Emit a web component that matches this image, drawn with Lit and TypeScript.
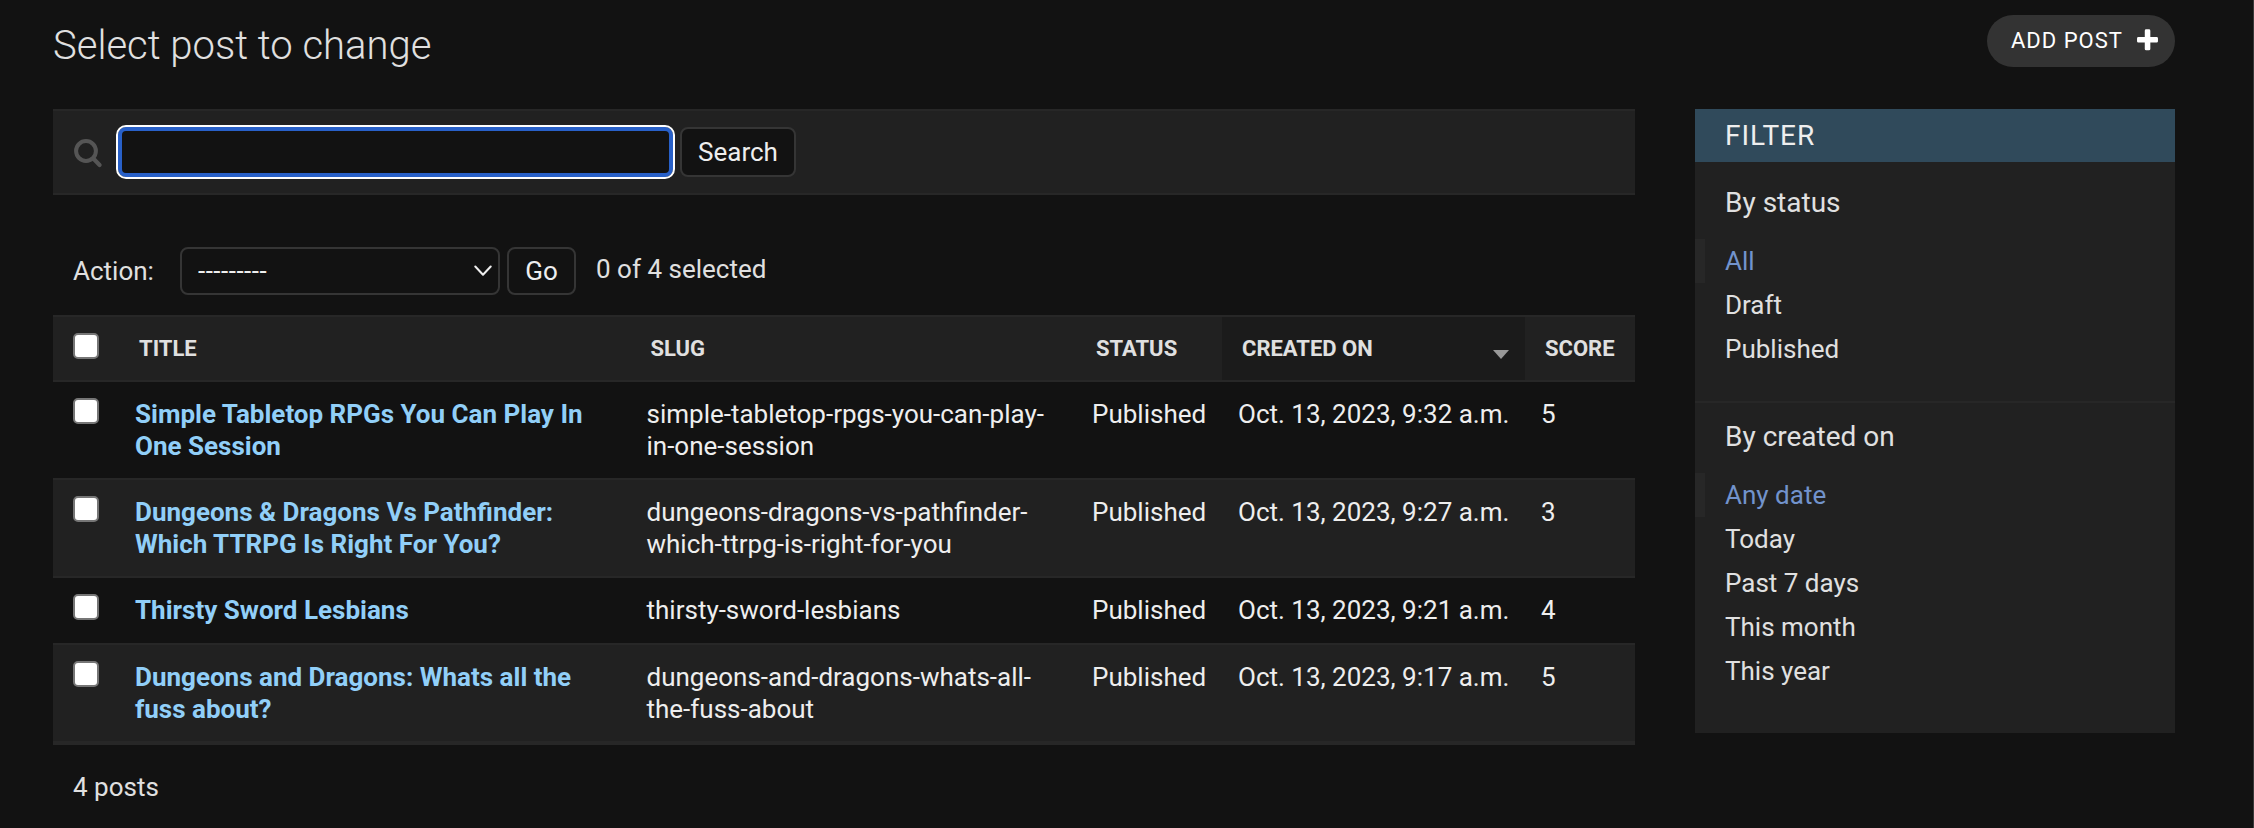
import { LitElement, html, css } from "lit";
import { customElement, state } from "lit/decorators.js";
import { classMap } from "lit/directives/class-map.js";

interface Post {
  title: string;
  slug: string;
  status: string;
  created: string;
  score: number;
}

interface FilterGroup {
  label: string;
  options: string[];
}

const POSTS: Post[] = [
  {
    title: "Simple Tabletop RPGs You Can Play In One Session",
    slug: "simple-tabletop-rpgs-you-can-play-in-one-session",
    status: "Published",
    created: "Oct. 13, 2023, 9:32 a.m.",
    score: 5,
  },
  {
    title: "Dungeons & Dragons Vs Pathfinder: Which TTRPG Is Right For You?",
    slug: "dungeons-dragons-vs-pathfinder-which-ttrpg-is-right-for-you",
    status: "Published",
    created: "Oct. 13, 2023, 9:27 a.m.",
    score: 3,
  },
  {
    title: "Thirsty Sword Lesbians",
    slug: "thirsty-sword-lesbians",
    status: "Published",
    created: "Oct. 13, 2023, 9:21 a.m.",
    score: 4,
  },
  {
    title: "Dungeons and Dragons: Whats all the fuss about?",
    slug: "dungeons-and-dragons-whats-all-the-fuss-about",
    status: "Published",
    created: "Oct. 13, 2023, 9:17 a.m.",
    score: 5,
  },
];

const FILTERS: FilterGroup[] = [
  { label: "By status", options: ["All", "Draft", "Published"] },
  {
    label: "By created on",
    options: ["Any date", "Today", "Past 7 days", "This month", "This year"],
  },
];

@customElement("filter-panel")
export class FilterPanel extends LitElement {
  @state() private chosen = FILTERS.map(() => 0);

  static styles = css`
    :host {
      display: block;
      height: 624px;
      background: #212121;
      color: #e0e0e0;
    }
    .heading {
      margin: 0;
      height: 53px;
      padding-left: 30px;
      background: #304a5b;
      color: #eeeeee;
      font-size: 28px;
      font-weight: 400;
      line-height: 53px;
      letter-spacing: 1px;
      text-transform: uppercase;
    }
    .group {
      padding: 24px 0 20px;
      border-bottom: 2px solid #272727;
    }
    .group + .group {
      padding-top: 17px;
    }
    .group:last-child {
      border-bottom: none;
    }
    .label {
      margin: 0 0 20px;
      padding-left: 30px;
      font-size: 28px;
      font-weight: 400;
      line-height: 33px;
    }
    .options {
      margin: 0 0 10px;
      padding: 0;
      list-style: none;
    }
    .option {
      box-sizing: border-box;
      height: 44px;
      padding-left: 20px;
      border-left: 10px solid transparent;
      line-height: 44px;
      cursor: pointer;
    }
    .option.selected {
      border-left-color: #272727;
      color: #7293cc;
    }
  `;

  private choose(group: number, option: number) {
    this.chosen = this.chosen.map((c, i) => (i === group ? option : c));
  }

  render() {
    return html`
      <h2 class="heading">Filter</h2>
      ${FILTERS.map(
        (group, g) => html`<section class="group">
          <h3 class="label">${group.label}</h3>
          <ul class="options">
            ${group.options.map(
              (option, o) => html`<li
                class=${classMap({ option: true, selected: this.chosen[g] === o })}
                @click=${() => this.choose(g, o)}
              >${option}</li>`
            )}
          </ul>
        </section>`
      )}
    `;
  }
}

@customElement("app-root")
export class AppRoot extends LitElement {
  @state() private selected = new Set<number>();

  static styles = css`
    :host {
      display: block;
      box-sizing: border-box;
      height: 828px;
      overflow: hidden;
      padding: 15px 78px 0 53px;
      border-right: 1px solid #3a3a3a;
      background: #121212;
      color: #e0e0e0;
      font-family: Roboto, "Liberation Sans", sans-serif;
      font-size: 26px;
      line-height: 32px;
    }
    .top {
      display: flex;
      justify-content: space-between;
      align-items: flex-start;
      height: 94px;
    }
    .page-title {
      margin: 7px 0 0;
      font-size: 40px;
      font-weight: 300;
      line-height: 47px;
    }
    .add {
      display: flex;
      align-items: center;
      box-sizing: border-box;
      width: 188px;
      height: 52px;
      padding-left: 24px;
      gap: 14px;
      border-radius: 26px;
      background: #333333;
      color: #ffffff;
      font-size: 22px;
      letter-spacing: 1px;
      line-height: 50px;
      white-space: nowrap;
    }
    .plus {
      width: 21px;
      height: 22px;
      margin-bottom: 2px;
      flex: none;
    }
    .columns {
      display: grid;
      grid-template-columns: 1582px 480px;
      column-gap: 60px;
      align-items: start;
    }
    .toolbar {
      display: flex;
      align-items: center;
      box-sizing: border-box;
      height: 86px;
      padding-left: 20px;
      border-top: 2px solid #272727;
      border-bottom: 2px solid #272727;
      background: #212121;
    }
    .lens {
      width: 30px;
      height: 30px;
      margin: 2px 13px 0 0;
    }
    .query {
      box-sizing: border-box;
      width: 559px;
      height: 54px;
      margin: 0 5px 0 0;
      padding: 0 12px;
      border: 2px solid #ffffff;
      border-radius: 10px;
      box-shadow: inset 0 0 0 4px #2860c8;
      outline: none;
      background: #121212;
      color: #eeeeee;
      font: inherit;
    }
    .button {
      box-sizing: border-box;
      padding: 0;
      border: 2px solid #353535;
      border-radius: 8px;
      background: #121212;
      color: #eeeeee;
      font: inherit;
    }
    .search-button {
      width: 116px;
      height: 50px;
    }
    .actions {
      display: flex;
      align-items: center;
      height: 48px;
      margin: 52px 0 20px;
      padding-left: 20px;
    }
    .actions-label {
      width: 107px;
    }
    .picker {
      display: grid;
      width: 320px;
      height: 48px;
      margin-right: 7px;
    }
    .select {
      grid-area: 1 / 1;
      appearance: none;
      box-sizing: border-box;
      width: 100%;
      padding: 0 16px;
      border: 2px solid #353535;
      border-radius: 8px;
      background: #121212;
      color: #eeeeee;
      font: inherit;
      letter-spacing: 0.5px;
    }
    .chevron {
      grid-area: 1 / 1;
      justify-self: end;
      align-self: center;
      width: 18px;
      height: 12px;
      margin-right: 8px;
      pointer-events: none;
    }
    .go {
      width: 69px;
      height: 48px;
    }
    .counter {
      margin: 0 0 4px 20px;
    }
    .results {
      width: 100%;
      table-layout: fixed;
      border-collapse: separate;
      border-spacing: 0;
      border-bottom: 2px solid #272727;
    }
    .col-check { width: 66px; }
    .col-title { width: 511.5px; }
    .col-slug { width: 445.5px; }
    .col-status { width: 146px; }
    .col-created { width: 303px; }
    .head {
      box-sizing: border-box;
      height: 67px;
      padding: 0 0 0 20px;
      border-top: 2px solid #272727;
      border-bottom: 2px solid #272727;
      background: #212121;
      font-size: 22px;
      font-weight: 700;
      line-height: 28px;
      text-align: left;
      text-transform: uppercase;
      vertical-align: middle;
      white-space: nowrap;
    }
    .head.check {
      padding-top: 16px;
      vertical-align: top;
    }
    .head.sorted {
      background: #1b1b1b;
    }
    .sort-row {
      display: flex;
      justify-content: space-between;
      align-items: center;
      padding-right: 16px;
    }
    .caret {
      width: 16px;
      height: 9px;
      margin-top: 12px;
    }
    .cell {
      box-sizing: border-box;
      height: 67px;
      padding: 16px 16px 0;
      border-bottom: 2px solid #272727;
      color: #eeeeee;
      font-weight: 400;
      text-align: left;
      vertical-align: top;
    }
    .row.tall .cell {
      height: 98px;
    }
    .row:nth-child(even) .cell {
      background: #212121;
    }
    .cell.check {
      padding-left: 20px;
    }
    .cell.title {
      color: #91cff8;
      font-weight: 700;
    }
    .cell.nowrap {
      white-space: nowrap;
    }
    .box {
      display: block;
      appearance: none;
      box-sizing: border-box;
      width: 26px;
      height: 26px;
      margin: 0;
      border: 2px solid #767676;
      border-radius: 5px;
      background: #ffffff;
    }
    .box:checked {
      border-color: #2860c8;
      background: #2860c8;
    }
    .total {
      margin: 26px 0 0;
      padding-left: 20px;
    }
  `;

  private toggle(index: number) {
    const next = new Set(this.selected);
    if (!next.delete(index)) next.add(index);
    this.selected = next;
  }

  private toggleAll() {
    this.selected =
      this.selected.size === POSTS.length ? new Set() : new Set(POSTS.keys());
  }

  private renderRow(post: Post, index: number) {
    const tall = post.title.length > 34;
    return html`<tr class=${classMap({ row: true, tall })}>
      <td class="cell check">
        <input
          class="box"
          type="checkbox"
          .checked=${this.selected.has(index)}
          @change=${() => this.toggle(index)}
        />
      </td>
      <th class="cell title">${post.title}</th>
      <td class="cell">${post.slug}</td>
      <td class="cell nowrap">${post.status}</td>
      <td class="cell nowrap">${post.created}</td>
      <td class="cell">${post.score}</td>
    </tr>`;
  }

  render() {
    return html`
      <header class="top">
        <h1 class="page-title">Select post to change</h1>
        <a class="add">
          <span>ADD POST</span>
          <svg class="plus" viewBox="0 0 20 21">
            <path
              d="M9 0.3h2.4a1.3 1.3 0 0 1 1.3 1.3v6.1h6a1.3 1.3 0 0 1 1.3 1.3v2.6a1.3 1.3 0 0 1-1.3 1.3h-6v6.2a1.3 1.3 0 0 1-1.3 1.3H8.7a1.3 1.3 0 0 1-1.3-1.3v-6.2H1.3A1.3 1.3 0 0 1 0 11.6V9a1.3 1.3 0 0 1 1.3-1.3h6.1V1.6A1.3 1.3 0 0 1 8.7 0.3z"
              fill="#fff"
            />
          </svg>
        </a>
      </header>
      <div class="columns">
        <main>
          <div class="toolbar">
            <svg class="lens" viewBox="0 0 30 30">
              <circle cx="13" cy="13" r="9.9" fill="none" stroke="#555" stroke-width="4" />
              <path d="M20.3 20.6l6.3 6.3" stroke="#555" stroke-width="4.2" stroke-linecap="round" />
            </svg>
            <input class="query" type="text" />
            <button class="button search-button">Search</button>
          </div>
          <div class="actions">
            <span class="actions-label">Action:</span>
            <div class="picker">
              <select class="select">
                <option>---------</option>
              </select>
              <svg class="chevron" viewBox="0 0 18 12">
                <path
                  d="M1.3 1.5L9 9.8l7.7-8.3"
                  fill="none"
                  stroke="#eee"
                  stroke-width="2"
                  stroke-linecap="round"
                  stroke-linejoin="round"
                />
              </svg>
            </div>
            <button class="button go">Go</button>
            <span class="counter">${this.selected.size} of ${POSTS.length} selected</span>
          </div>
          <table class="results">
            <colgroup>
              <col class="col-check" />
              <col class="col-title" />
              <col class="col-slug" />
              <col class="col-status" />
              <col class="col-created" />
              <col />
            </colgroup>
            <thead>
              <tr>
                <th class="head check">
                  <input
                    class="box"
                    type="checkbox"
                    .checked=${this.selected.size === POSTS.length}
                    @change=${this.toggleAll}
                  />
                </th>
                <th class="head">Title</th>
                <th class="head">Slug</th>
                <th class="head">Status</th>
                <th class="head sorted">
                  <div class="sort-row">
                    <span>Created on</span>
                    <svg class="caret" viewBox="0 0 16 9">
                      <path d="M0 0h16L8 9z" fill="#999" />
                    </svg>
                  </div>
                </th>
                <th class="head">Score</th>
              </tr>
            </thead>
            <tbody>
              ${POSTS.map((post, i) => this.renderRow(post, i))}
            </tbody>
          </table>
          <p class="total">${POSTS.length} posts</p>
        </main>
        <filter-panel></filter-panel>
      </div>
    `;
  }
}
